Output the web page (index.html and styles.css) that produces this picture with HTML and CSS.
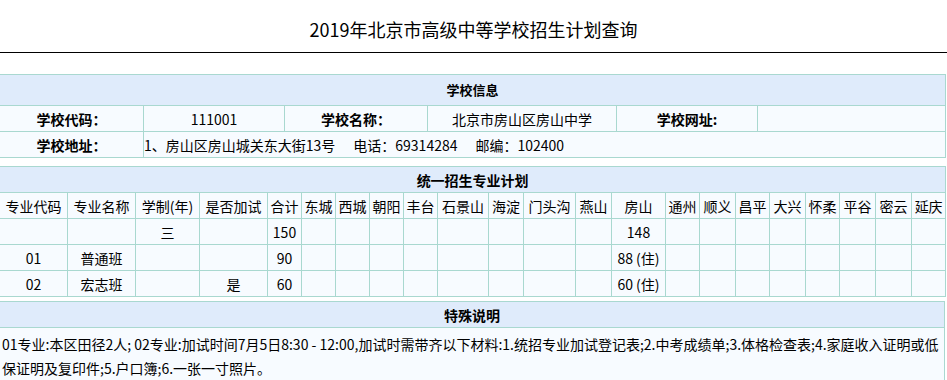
FILE: index.html
```html
<!DOCTYPE html>
<html lang="zh-CN">
<head>
<meta charset="utf-8">
<title>2019年北京市高级中等学校招生计划查询</title>
<link rel="stylesheet" href="styles.css">
</head>
<body>
<div class="page-title">2019年北京市高级中等学校招生计划查询</div>

<table class="grid school">
  <colgroup>
    <col class="s1"><col class="s2"><col class="s3"><col class="s4"><col class="s5"><col class="s6">
  </colgroup>
  <tr class="head tall"><td colspan="6" class="h-small">学校信息</td></tr>
  <tr>
    <td class="label">学校代码：</td>
    <td>111001</td>
    <td class="label">学校名称：</td>
    <td>北京市房山区房山中学</td>
    <td class="label">学校网址:</td>
    <td></td>
  </tr>
  <tr>
    <td class="label">学校地址：</td>
    <td colspan="5" class="left">1、房山区房山城关东大街13号<span class="gap">电话：69314284</span><span class="gap">邮编：102400</span></td>
  </tr>
</table>

<table class="grid plan">
  <colgroup>
    <col class="w68"><col class="w68"><col class="w64"><col class="w68">
    <col class="w34"><col class="w34"><col class="w34"><col class="w34"><col class="w34">
    <col class="w51"><col class="w35"><col class="w52"><col class="w36"><col class="w54">
    <col class="w34"><col class="w36"><col class="w34"><col class="w36"><col class="w34">
    <col class="w36"><col class="w36"><col class="w34">
  </colgroup>
  <tr class="head"><td colspan="22">统一招生专业计划</td></tr>
  <tr>
    <td>专业代码</td><td>专业名称</td><td>学制(年)</td><td>是否加试</td><td>合计</td>
    <td>东城</td><td>西城</td><td>朝阳</td><td>丰台</td><td>石景山</td><td>海淀</td><td>门头沟</td>
    <td>燕山</td><td>房山</td><td>通州</td><td>顺义</td><td>昌平</td><td>大兴</td><td>怀柔</td>
    <td>平谷</td><td>密云</td><td>延庆</td>
  </tr>
  <tr>
    <td></td><td></td><td>三</td><td></td><td>150</td>
    <td></td><td></td><td></td><td></td><td></td><td></td><td></td>
    <td></td><td>148</td><td></td><td></td><td></td><td></td><td></td>
    <td></td><td></td><td></td>
  </tr>
  <tr>
    <td>01</td><td>普通班</td><td></td><td></td><td>90</td>
    <td></td><td></td><td></td><td></td><td></td><td></td><td></td>
    <td></td><td>88 (住)</td><td></td><td></td><td></td><td></td><td></td>
    <td></td><td></td><td></td>
  </tr>
  <tr>
    <td>02</td><td>宏志班</td><td></td><td>是</td><td>60</td>
    <td></td><td></td><td></td><td></td><td></td><td></td><td></td>
    <td></td><td>60 (住)</td><td></td><td></td><td></td><td></td><td></td>
    <td></td><td></td><td></td>
  </tr>
</table>

<table class="grid notes">
  <tr class="head"><td>特殊说明</td></tr>
  <tr>
    <td class="note">01专业:本区田径2人; 02专业:加试时间7月5日8:30 - 12:00,加试时需带齐以下材料:1.统招专业加试登记表;2.中考成绩单;3.体格检查表;4.家庭收入证明或低保证明及复印件;5.户口簿;6.一张一寸照片。</td>
  </tr>
</table>
</body>
</html>
```

FILE: styles.css
```css
html, body {
  margin: 0;
  padding: 0;
  background: #ffffff;
  color: #000000;
  font-family: "Noto Sans CJK SC", "Noto Sans", sans-serif;
  font-size: 14px;
}

.page-title {
  height: 53px;
  box-sizing: border-box;
  padding-top: 17px;
  line-height: 24px;
  border-bottom: 1px solid #000;
  text-align: center;
  font-size: 18px;
}

.grid {
  border-collapse: collapse;
  table-layout: fixed;
  width: 946px;
  margin-left: -1px;
  background: #f7fbff;
}

.grid td {
  border: 1px solid #a9d8d0;
  height: 25px;
  padding: 0;
  text-align: center;
  line-height: 20px;
  white-space: nowrap;
  overflow: hidden;
}

.grid .head td {
  background: #dfebfb;
  font-weight: bold;
}

.grid .head.tall td {
  height: 30px;
}

.grid .h-small {
  font-size: 13px;
}

.school {
  margin-top: 21px;
}

.plan {
  margin-top: 8px;
}

.notes {
  margin-top: 4px;
}

.label {
  font-weight: bold;
}

.grid td.left {
  text-align: left;
}

.gap {
  margin-left: 18px;
}

.grid td.note {
  white-space: normal;
  text-align: left;
  line-height: 24px;
  padding: 4px 1px 12px 2px;
  vertical-align: top;
}

.s1 { width: 144px; }
.s2 { width: 141px; }
.s3 { width: 143px; }
.s4 { width: 189px; }
.s5 { width: 141px; }
.s6 { width: 188px; }

.w34 { width: 34px; }
.w35 { width: 35px; }
.w36 { width: 36px; }
.w51 { width: 51px; }
.w52 { width: 52px; }
.w54 { width: 54px; }
.w64 { width: 64px; }
.w68 { width: 68px; }
```
